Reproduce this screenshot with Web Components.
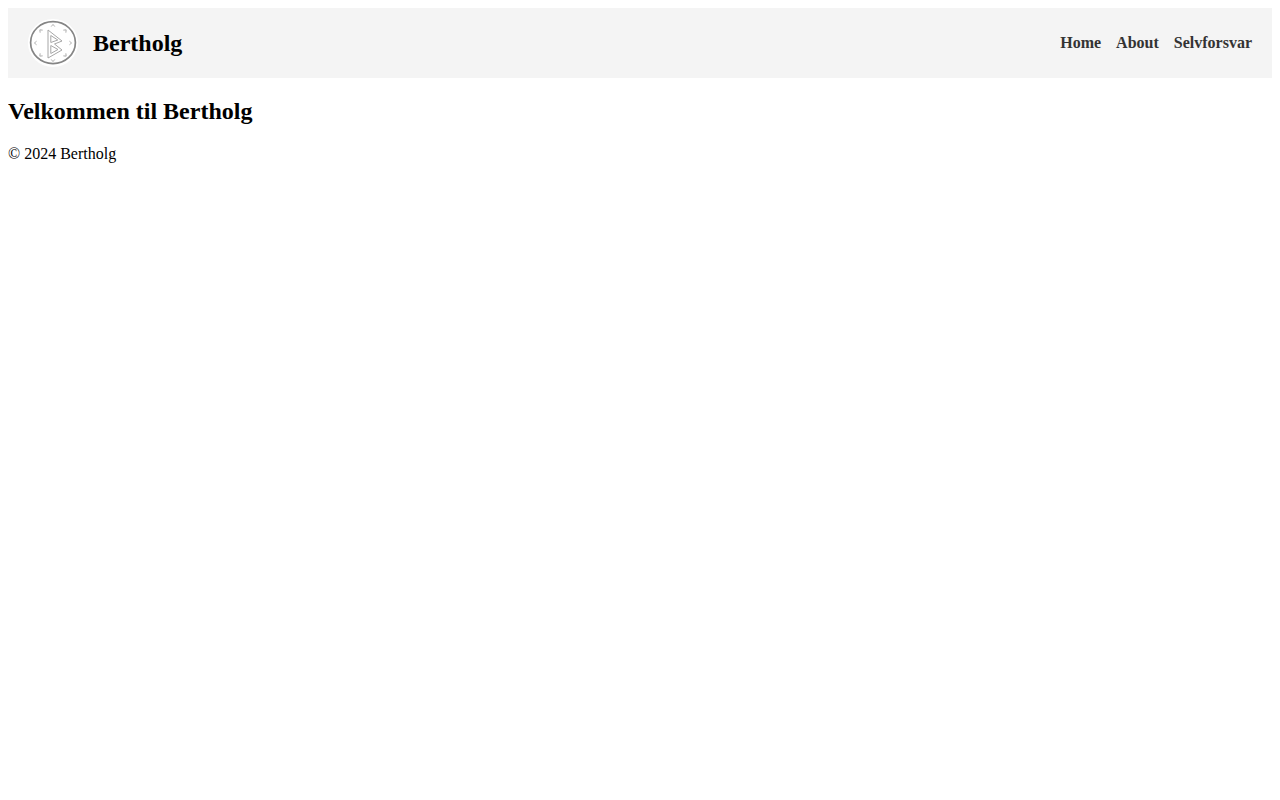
<!DOCTYPE html>
<html lang="no">
<head>
<meta charset="utf-8">
<title>Bertholg</title>
<style>
  body {
    margin: 8px;
    background: #fff;
    font-family: "Liberation Serif", serif;
  }
</style>
</head>
<body>
<site-header>
  <nav-link>Home</nav-link>
  <nav-link>About</nav-link>
  <nav-link>Selvforsvar</nav-link>
</site-header>
<site-main>Velkommen til Bertholg</site-main>
<site-footer>© 2024 Bertholg</site-footer>

<script>
class SiteLogo extends HTMLElement {
  constructor() {
    super();

    const shadowRoot = this.attachShadow({ mode: 'open' });

    // small arrowheads around the rim
    const marks = [0, 45, 90, 135, 180, 225, 270, 315].map((angle) => {
      return `<path d="M23.2 8.6 L25 6.4 L26.8 8.6" transform="rotate(${angle} 25 25)"/>`;
    }).join('');

    shadowRoot.innerHTML = `
      <style>
        :host {
          display: block;
          width: 50px;
          height: 50px;
          flex: none;
        }
        svg {
          display: block;
        }
        .ink {
          filter: blur(0.45px);
        }
      </style>
      <svg width="50" height="50" viewBox="0 0 50 50" fill="none">
        <ellipse cx="25" cy="25" rx="25" ry="24" fill="#fff"/>
        <g class="ink">
          <ellipse cx="25" cy="24.6" rx="22.4" ry="21" stroke="#858585" stroke-width="1.7"/>
          <g stroke="#aaa" stroke-width="0.9">${marks}</g>
          <g stroke="#a6a6a6" stroke-width="1">
            <path d="M20 12 L20 40 L34 32 L26.5 26 L34 23 Z"/>
            <path d="M22.8 17.5 L22.8 24.5 L29.8 22 Z"/>
            <path d="M22.8 27.5 L22.8 35.5 L30 31.5 Z"/>
          </g>
        </g>
      </svg>
    `;
  }
}

class NavLink extends HTMLElement {
  constructor() {
    super();

    const shadowRoot = this.attachShadow({ mode: 'open' });

    shadowRoot.innerHTML = `
      <style>
        :host {
          display: block;
          color: #333;
          font-size: 16px;
          font-weight: bold;
        }
      </style>
      <slot></slot>
    `;
  }
}

class SiteHeader extends HTMLElement {
  constructor() {
    super();

    const shadowRoot = this.attachShadow({ mode: 'open' });

    shadowRoot.innerHTML = `
      <style>
        :host {
          display: flex;
          justify-content: space-between;
          align-items: center;
          padding: 10px 20px;
          background: #f4f4f4;
        }
        .brand {
          display: flex;
          align-items: center;
          gap: 15px;
        }
        .name {
          color: #000;
          font-size: 24px;
          font-weight: bold;
        }
        nav {
          display: flex;
          gap: 15px;
        }
      </style>
      <div class="brand">
        <site-logo></site-logo>
        <span class="name">Bertholg</span>
      </div>
      <nav><slot></slot></nav>
    `;
  }
}

class SiteMain extends HTMLElement {
  constructor() {
    super();

    const shadowRoot = this.attachShadow({ mode: 'open' });

    shadowRoot.innerHTML = `
      <style>
        :host {
          display: block;
        }
        h1 {
          margin: 19.92px 0;
          font-size: 24px;
          font-weight: bold;
        }
      </style>
      <h1><slot></slot></h1>
    `;
  }
}

class SiteFooter extends HTMLElement {
  constructor() {
    super();

    const shadowRoot = this.attachShadow({ mode: 'open' });

    shadowRoot.innerHTML = `
      <style>
        :host {
          display: block;
          font-size: 16px;
        }
      </style>
      <slot></slot>
    `;
  }
}

window.customElements.define('site-logo', SiteLogo);
window.customElements.define('nav-link', NavLink);
window.customElements.define('site-header', SiteHeader);
window.customElements.define('site-main', SiteMain);
window.customElements.define('site-footer', SiteFooter);
</script>
</body>
</html>
